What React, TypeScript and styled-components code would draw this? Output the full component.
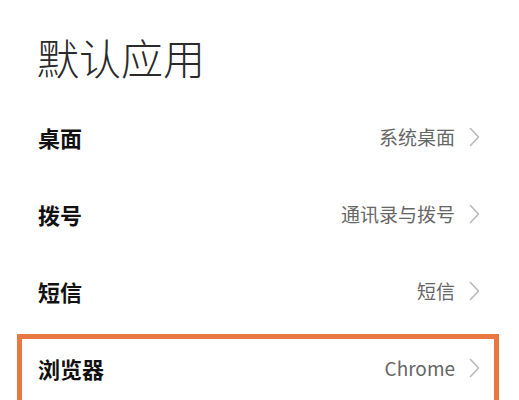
import * as React from "react";
import styled, { createGlobalStyle } from "styled-components";

interface Entry {
  label: string;
  value: string;
  marked?: boolean;
}

const entries: Entry[] = [
  { label: "桌面", value: "系统桌面" },
  { label: "拨号", value: "通讯录与拨号" },
  { label: "短信", value: "短信" },
  { label: "浏览器", value: "Chrome", marked: true },
];

const Chevron = () => (
  <svg width="11" height="20" viewBox="0 0 11 20" fill="none">
    <path d="M1.5 1.5 L9.5 10 L1.5 18.5" stroke="#b9b9b9" strokeWidth="1.6" strokeLinecap="round" strokeLinejoin="round" />
  </svg>
);

const App = () => {
  return (
    <Page>
      <GlobalStyle />
      <Title>默认应用</Title>
      <List>
        {entries.map((e) => (
          <Row key={e.label} marked={e.marked}>
            <Label>{e.label}</Label>
            <Right>
              <Value>{e.value}</Value>
              <Chevron />
            </Right>
          </Row>
        ))}
      </List>
    </Page>
  );
};

const GlobalStyle = createGlobalStyle`
  html, body {
    margin: 0;
    padding: 0;
    background: #ffffff;
  }
  body {
    font-family: "Noto Sans CJK SC", "Noto Sans", sans-serif;
  }
`;

const Page = styled.div`
  width: 519px;
  height: 400px;
  overflow: hidden;
  background: #ffffff;
`;

const Title = styled.h1`
  margin: 0 0 12px;
  padding: 28px 0 0 37px;
  font-size: 42px;
  line-height: 58px;
  font-weight: 300;
  color: #2a2a2a;
`;

const List = styled.div`
  display: flex;
  flex-direction: column;
`;

const Row = styled.div<{ marked?: boolean }>`
  position: relative;
  height: 77px;
  display: flex;
  align-items: center;
  justify-content: space-between;
  padding: 0 39px 0 38px;

  ${(p) =>
    p.marked &&
    `
    &::after {
      content: "";
      position: absolute;
      left: 17px;
      right: 20px;
      top: 5px;
      height: 90px;
      border: 5px solid #e8783f;
      pointer-events: none;
    }
  `}
`;

const Label = styled.span`
  font-size: 22px;
  font-weight: 700;
  color: #111111;
`;

const Right = styled.div`
  display: flex;
  align-items: center;
  gap: 14px;
`;

const Value = styled.span`
  font-size: 19px;
  color: #666666;
`;

export default App;
